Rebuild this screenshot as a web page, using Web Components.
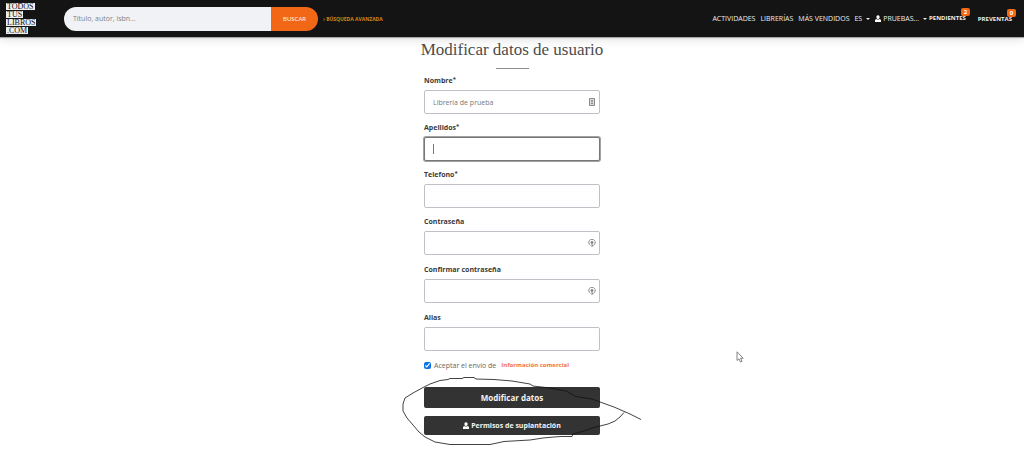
<!DOCTYPE html>
<html lang="es">
<head>
<meta charset="utf-8">
<meta name="viewport" content="width=device-width, initial-scale=1">
<title>Modificar datos de usuario</title>
<style>
body { margin: 0; background: #fff; color: #444; font: 7px/12px "Open Sans", "Noto Sans", sans-serif; }
</style>
</head>
<body>
<ttl-page></ttl-page>
<script>
function define(name, html, setup) {
  const t = document.createElement('template');
  t.innerHTML = html;
  customElements.define(name, class extends HTMLElement {
    constructor() {
      super();
      this.attachShadow({ mode: 'open' }).append(t.content.cloneNode(true));
    }
    connectedCallback() { if (setup) setup(this, this.shadowRoot); }
  });
}

define('ttl-logo', `<style>
:host { display: block; width: 34px; }
a { display: flex; flex-direction: column; align-items: flex-start; gap: 1px; color: #111; text-decoration: none; font: 8px/7px "Liberation Serif", serif; }
span { background: #eee; height: 7px; padding: 0 1px; white-space: nowrap; }
</style>
<a href="#"><span>TODOS</span><span>TUS</span><span>LIBROS</span><span>.COM</span></a>`);

define('ttl-search', `<style>
:host { display: block; width: 254px; }
form { display: flex; height: 24px; border-radius: 12px; overflow: hidden; }
input { flex: 1; min-width: 0; border: 0; outline: 0; padding: 0 9px; background: #f0f2f5; color: #444; font: 7px "Open Sans", sans-serif; }
input::placeholder { color: #7c848b; opacity: 1; }
button { width: 47px; border: 0; padding: 0; background: #f26716; color: #fff; font: 6px "Open Sans", sans-serif; }
</style>
<form><input type="search" aria-label="Buscar libros" placeholder="Título, autor, isbn..."><button type="button">BUSCAR</button></form>`);

define('ttl-nav-link', `<style>
:host { display: block; position: relative; }
a { display: flex; align-items: center; gap: 2px; color: #eee; text-decoration: none; white-space: nowrap; font: 500 7px/10px "Open Sans", sans-serif; }
:host([count]) a { font-size: 6px; font-weight: 700; }
i { display: none; border: 2px solid transparent; border-top-color: #eee; border-bottom: 0; margin-left: 2px; }
:host([menu]) i { display: block; }
b { position: absolute; right: -4px; top: -5px; width: 9px; height: 8px; border-radius: 2px; background: #f26716; color: #fff; font: bold 6px/8px "Open Sans", sans-serif; text-align: center; }
b:empty { display: none; }
</style><a href="#"><slot name="icon"></slot><slot></slot><i></i></a><b></b>`,
(el, r) => { r.querySelector('b').textContent = el.getAttribute('count') || ''; });

define('ttl-user-icon', `<style>:host { display: block; width: 6px; height: 7px; } svg { display: block; }</style>
<svg width="6" height="7" viewBox="0 0 12 14" fill="#fff"><path d="M3 2Q6-1 9 2V6Q8 8 6 8T3 6z"/><path d="M0 14v-3q0-3 3-3q3 2 6 0q3 0 3 3v3z"/></svg>`);

define('ttl-header', `<style>
:host { display: block; }
header { display: flex; align-items: center; height: 37px; padding: 0 12px 0 6px; background: #141414; box-shadow: 0 1px 1px #aaa, 0 2px 10px #0002; }
ttl-search { margin: 0 5px 0 24px; }
.adv { color: #d98218; text-decoration: none; font: 700 5px/10px "Open Sans", sans-serif; white-space: nowrap; }
nav { display: flex; align-items: center; gap: 5px; margin-left: auto; }
.prev { margin-left: 7px; }
.pend { margin-left: -3px; margin-bottom: 2px; }
</style>
<header><ttl-logo></ttl-logo><ttl-search></ttl-search><a class="adv" href="#">› BÚSQUEDA AVANZADA</a>
<nav aria-label="Principal"><ttl-nav-link>ACTIVIDADES</ttl-nav-link><ttl-nav-link>LIBRERÍAS</ttl-nav-link><ttl-nav-link>MÁS VENDIDOS</ttl-nav-link><ttl-nav-link menu>ES</ttl-nav-link><ttl-nav-link menu><ttl-user-icon slot="icon"></ttl-user-icon>PRUEBAS...</ttl-nav-link><ttl-nav-link class="pend" count="2">PENDIENTES</ttl-nav-link><ttl-nav-link class="prev" count="0">PREVENTAS</ttl-nav-link></nav></header>`);

define('ttl-field', `<style>
:host { display: block; margin-bottom: 8px; }
:host([required]) { margin-bottom: 7px; }
label { display: block; height: 12px; margin-bottom: 4px; color: #3b3b3b; font: bold 7px/14px "Open Sans", sans-serif; }
sup { display: none; font-size: 6px; line-height: 0; vertical-align: 2px; }
:host([required]) sup { display: inline; }
div { position: relative; }
input { display: block; box-sizing: border-box; width: 100%; height: 24px; border: 1px solid #bfc1c8; border-radius: 2px; outline: 0; padding: 0 8px; background: #fff; color: #777; font: 7px "Open Sans", sans-serif; }
:host([active]) input { border-color: #777; box-shadow: 0 0 0 1px #a2a2a2; }
.caret { display: none; position: absolute; left: 9px; top: 7px; width: 1px; height: 10px; background: #777; }
:host([active]) .caret { display: block; }
svg { display: none; position: absolute; right: 4px; top: 8px; }
:host([icon=card]) .card, :host([icon=key]) .key { display: block; }
</style>
<label for="f"><span></span><sup>*</sup></label>
<div><input id="f"><span class="caret"></span>
<svg class="card" width="8" height="8" viewBox="0 0 8 8"><path d="M1.5.5h5v7h-5z" fill="#ddd" stroke="#888"/><path d="M3 2.500h2M4 2.500v3M3 5.500h2" stroke="#777" stroke-width=".7"/></svg>
<svg class="key" width="8" height="8" viewBox="0 0 8 8" fill="none" stroke="#888"><path d="M2.500 6.300A3.200 3.200 0 1 1 5.500 6.300" /><circle cx="4" cy="3.500" r="1.400" fill="#888" stroke="none"/><path d="M4 4v4M4 6.500h1.300"/></svg></div>`,
(el, r) => {
  r.querySelector('label span').textContent = el.getAttribute('label');
  const input = r.querySelector('input');
  input.type = el.getAttribute('type') || 'text';
  input.value = el.getAttribute('value') || '';
});

define('ttl-button', `<style>
:host { display: block; }
button { display: flex; align-items: center; justify-content: center; gap: 2px; width: 100%; height: 19px; border: 0; border-radius: 2px; padding: 0; background: #333; color: #f4f4f4; font: bold 7px "Open Sans", sans-serif; }
:host([large]) button { height: 21px; font-size: 8px; }
</style><button type="button"><slot></slot></button>`);

define('ttl-annotation', `<style>:host { display: block; pointer-events: none; } svg { display: block; }</style>
<svg width="242" height="72" viewBox="400 375 242 72" fill="none" stroke="#111" stroke-width=".8" stroke-linejoin="round" aria-hidden="true"><path d="M641 419.500L630 414L614 407L600 402L592 399L576 396.500L566 391L550 388L533 386L530 384L512 381L494 379.500L476 379L474 377.500H464L462 378.500H450L448 379.500L440 380.500L430 384L424 387L413 393L405 398L403 404L403 411L407 418L413 425L419 432L425 437L435 442L450 444.500H490L504 441.500L530 440L543 438L554 437L561 436.500L572 436.500L573 434L584 431L592 428L608 424L615 421L620 417L624 412.500"/></svg>`);

define('ttl-account-form', `<style>
:host { display: flex; flex-direction: column; align-items: center; padding-bottom: 15px; }
h1 { margin: 0; padding-top: 4px; color: #4c4c4c; font: 17px/18px "Liberation Serif", serif; white-space: nowrap; }
hr { width: 33px; height: 1px; margin: 9px 0 5px; border: 0; background: #8c8c8c; }
form { position: relative; width: 176px; }
.accept { display: flex; align-items: center; height: 13px; font: 7px/13px "Open Sans", sans-serif; color: #666; white-space: nowrap; }
.accept input { width: 7px; height: 7px; margin: 0 3px 0 0; accent-color: #0b75e8; }
.accept a { margin-left: 5px; color: #f5713f; text-decoration: none; font: 700 6px/13px "Open Sans", sans-serif; }
ttl-button[large] { margin: 15px 0 8px; }
ttl-annotation { position: absolute; left: -24px; bottom: -12px; }
.pointer { position: absolute; left: 312px; bottom: 72px; }
</style>
<h1>Modificar datos de usuario</h1><hr>
<form>
<ttl-field label="Nombre" value="Librería de prueba" required icon="card"></ttl-field>
<ttl-field label="Apellidos" required active></ttl-field>
<ttl-field label="Telefono" type="tel" required></ttl-field>
<ttl-field label="Contraseña" type="password" icon="key"></ttl-field>
<ttl-field label="Confirmar contraseña" type="password" icon="key"></ttl-field>
<ttl-field label="Alias"></ttl-field>
<div class="accept"><input id="accept" type="checkbox" checked><label for="accept">Aceptar el envío de</label><a href="#">Información comercial</a></div>
<ttl-button large>Modificar datos</ttl-button>
<ttl-button><ttl-user-icon></ttl-user-icon>Permisos de suplantación</ttl-button>
<ttl-annotation></ttl-annotation>
<svg class="pointer" width="8" height="12" viewBox="0 0 8 12" aria-hidden="true"><path d="M1 .8V9.500L3 7.800L4.500 11L6 10.300L4.600 7.300H7.200z" fill="#fff" stroke="#777" stroke-width=".9"/></svg>
</form>`);

define('ttl-page', `<style>:host { display: block; } ttl-header { position: relative; }</style><ttl-header></ttl-header><main><ttl-account-form></ttl-account-form></main>`);
</script>
</body>
</html>
